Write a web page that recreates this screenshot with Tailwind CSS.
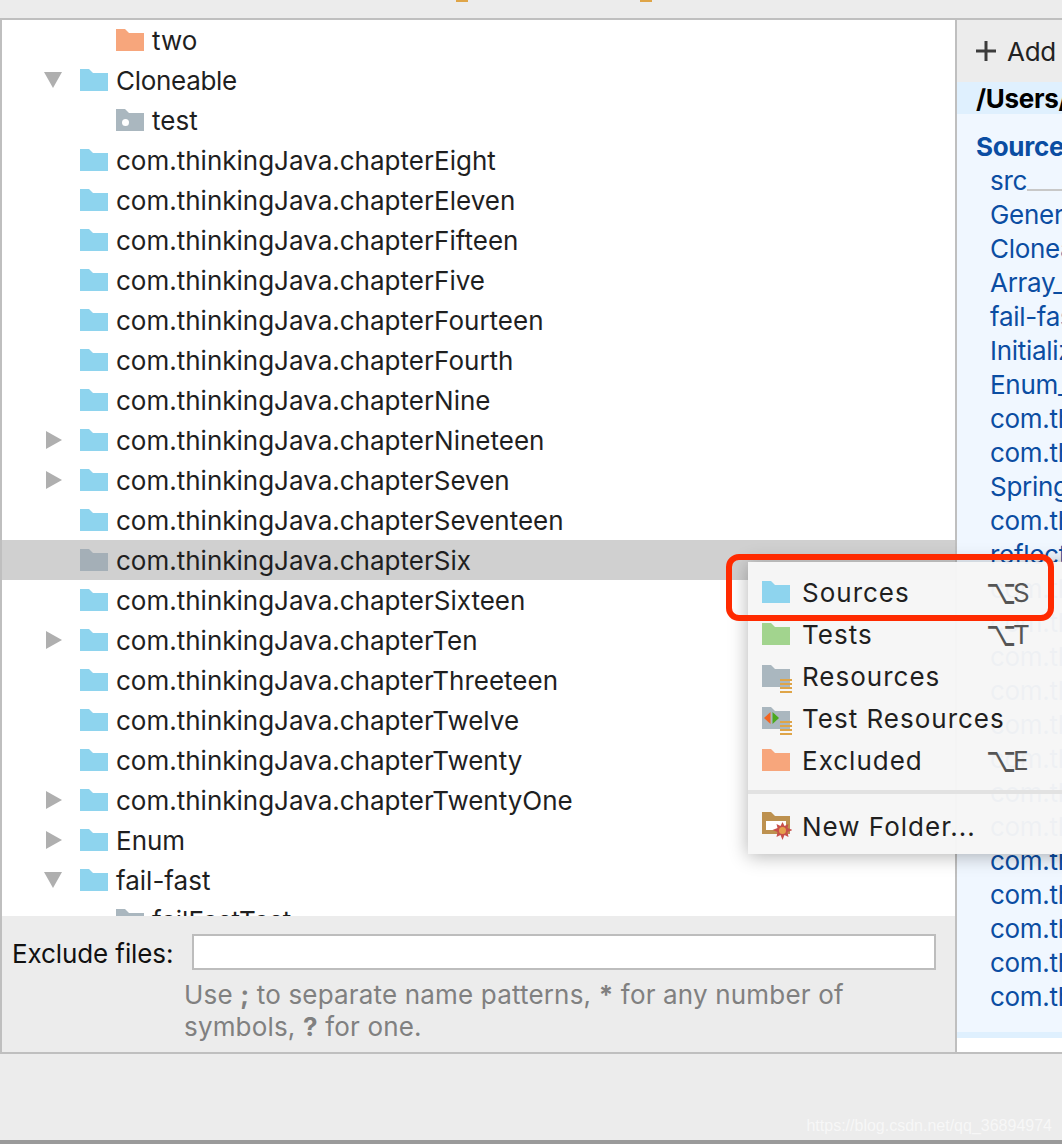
<!DOCTYPE html>
<html><head><meta charset="utf-8"><script src="https://cdn.jsdelivr.net/npm/@tailwindcss/browser@4"></script></head>
<body class="m-0">
<svg class="hidden" width="0" height="0">
<symbol id="folder" viewBox="0 0 28 22"><path fill="currentColor" d="M0 0H9L13 4H28V22H0Z"/></symbol>
<symbol id="right" viewBox="0 0 16 18"><path fill="#afafaf" d="M0 0L16 9L0 18Z"/></symbol>
<symbol id="down" viewBox="0 0 18 16"><path fill="#afafaf" d="M0 0H18L9 16Z"/></symbol>
<symbol id="lines" viewBox="0 0 12 14"><path fill="#dfa548" d="M0 0H12V2H0ZM0 4H12V6H0ZM0 8H12V10H0ZM0 12H12V14H0Z"/></symbol>
</svg>
<div class="relative flex h-[1144px] w-[1062px] flex-col overflow-hidden bg-[#ececec] font-['Inter',sans-serif] text-[26px] text-[#1f1f1f]">
  <div class="relative h-5 shrink-0 border-b-2 border-[#bfbfbf]">
    <div class="absolute left-[456px] top-0 h-0.5 w-3 bg-[#dfa548]"></div>
    <div class="absolute left-[640px] top-0 h-0.5 w-3 bg-[#dfa548]"></div>
  </div>
  <div class="flex h-[1034px] shrink-0 border-b-2 border-[#bfbfbf]">
    <div class="flex w-[955px] shrink-0 flex-col border-l-2 border-[#bfbfbf]">
      <div class="h-[896px] shrink-0 overflow-hidden bg-white">
        <div class="flex h-10 items-center pl-[114px]"><svg class="h-[22px] w-7 text-[#f7a67c]"><use href="#folder"/></svg><span class="ml-2">two</span></div>
        <div class="flex h-10 items-center pl-[42px]"><svg class="mr-[18px] h-4 w-[18px]"><use href="#down"/></svg><svg class="h-[22px] w-7 text-[#8ed4ee]"><use href="#folder"/></svg><span class="ml-2 tracking-[-0.3px]">Cloneable</span></div>
        <div class="flex h-10 items-center pl-[114px]"><span class="relative h-[22px] w-7"><svg class="h-[22px] w-7 text-[#aab7bf]"><use href="#folder"/></svg><span class="absolute left-[6px] top-[10px] size-[7px] rounded-full bg-white"></span></span><span class="ml-2">test</span></div>
        <div class="flex h-10 items-center pl-[78px]"><svg class="h-[22px] w-7 text-[#8ed4ee]"><use href="#folder"/></svg><span class="ml-2">com.thinkingJava.chapterEight</span></div>
        <div class="flex h-10 items-center pl-[78px]"><svg class="h-[22px] w-7 text-[#8ed4ee]"><use href="#folder"/></svg><span class="ml-2">com.thinkingJava.chapterEleven</span></div>
        <div class="flex h-10 items-center pl-[78px]"><svg class="h-[22px] w-7 text-[#8ed4ee]"><use href="#folder"/></svg><span class="ml-2">com.thinkingJava.chapterFifteen</span></div>
        <div class="flex h-10 items-center pl-[78px]"><svg class="h-[22px] w-7 text-[#8ed4ee]"><use href="#folder"/></svg><span class="ml-2">com.thinkingJava.chapterFive</span></div>
        <div class="flex h-10 items-center pl-[78px]"><svg class="h-[22px] w-7 text-[#8ed4ee]"><use href="#folder"/></svg><span class="ml-2">com.thinkingJava.chapterFourteen</span></div>
        <div class="flex h-10 items-center pl-[78px]"><svg class="h-[22px] w-7 text-[#8ed4ee]"><use href="#folder"/></svg><span class="ml-2">com.thinkingJava.chapterFourth</span></div>
        <div class="flex h-10 items-center pl-[78px]"><svg class="h-[22px] w-7 text-[#8ed4ee]"><use href="#folder"/></svg><span class="ml-2">com.thinkingJava.chapterNine</span></div>
        <div class="flex h-10 items-center pl-[44px]"><svg class="mr-[18px] h-[18px] w-4"><use href="#right"/></svg><svg class="h-[22px] w-7 text-[#8ed4ee]"><use href="#folder"/></svg><span class="ml-2">com.thinkingJava.chapterNineteen</span></div>
        <div class="flex h-10 items-center pl-[44px]"><svg class="mr-[18px] h-[18px] w-4"><use href="#right"/></svg><svg class="h-[22px] w-7 text-[#8ed4ee]"><use href="#folder"/></svg><span class="ml-2">com.thinkingJava.chapterSeven</span></div>
        <div class="flex h-10 items-center pl-[78px]"><svg class="h-[22px] w-7 text-[#8ed4ee]"><use href="#folder"/></svg><span class="ml-2">com.thinkingJava.chapterSeventeen</span></div>
        <div class="flex h-10 items-center bg-[#d0d0d0] pl-[78px]"><svg class="h-[22px] w-7 text-[#a4afb7]"><use href="#folder"/></svg><span class="ml-2">com.thinkingJava.chapterSix</span></div>
        <div class="flex h-10 items-center pl-[78px]"><svg class="h-[22px] w-7 text-[#8ed4ee]"><use href="#folder"/></svg><span class="ml-2">com.thinkingJava.chapterSixteen</span></div>
        <div class="flex h-10 items-center pl-[44px]"><svg class="mr-[18px] h-[18px] w-4"><use href="#right"/></svg><svg class="h-[22px] w-7 text-[#8ed4ee]"><use href="#folder"/></svg><span class="ml-2">com.thinkingJava.chapterTen</span></div>
        <div class="flex h-10 items-center pl-[78px]"><svg class="h-[22px] w-7 text-[#8ed4ee]"><use href="#folder"/></svg><span class="ml-2">com.thinkingJava.chapterThreeteen</span></div>
        <div class="flex h-10 items-center pl-[78px]"><svg class="h-[22px] w-7 text-[#8ed4ee]"><use href="#folder"/></svg><span class="ml-2">com.thinkingJava.chapterTwelve</span></div>
        <div class="flex h-10 items-center pl-[78px]"><svg class="h-[22px] w-7 text-[#8ed4ee]"><use href="#folder"/></svg><span class="ml-2">com.thinkingJava.chapterTwenty</span></div>
        <div class="flex h-10 items-center pl-[44px]"><svg class="mr-[18px] h-[18px] w-4"><use href="#right"/></svg><svg class="h-[22px] w-7 text-[#8ed4ee]"><use href="#folder"/></svg><span class="ml-2">com.thinkingJava.chapterTwentyOne</span></div>
        <div class="flex h-10 items-center pl-[44px]"><svg class="mr-[18px] h-[18px] w-4"><use href="#right"/></svg><svg class="h-[22px] w-7 text-[#8ed4ee]"><use href="#folder"/></svg><span class="ml-2">Enum</span></div>
        <div class="flex h-10 items-center pl-[42px]"><svg class="mr-[18px] h-4 w-[18px]"><use href="#down"/></svg><svg class="h-[22px] w-7 text-[#8ed4ee]"><use href="#folder"/></svg><span class="ml-2">fail-fast</span></div>
        <div class="flex h-10 items-center pl-[114px]"><svg class="h-[22px] w-7 text-[#aab7bf]"><use href="#folder"/></svg><span class="ml-2">failFastTest</span></div>
      </div>
      <div class="flex-1 pl-[10px] pt-[18px]">
        <div class="flex h-9 items-center">
          <span class="w-[180px] pt-0.5 tracking-[-0.1px] text-[#111]">Exclude files:</span>
          <div class="h-9 w-[744px] border-2 border-[#bdbdbd] bg-white"></div>
        </div>
        <p class="ml-[172px] mt-[9px] w-[740px] leading-8 tracking-[0.17px] text-[#808080]">Use <b>;</b> to separate name patterns, <b>*</b> for any number of symbols, <b>?</b> for one.</p>
      </div>
    </div>
    <div class="flex min-w-0 flex-1 flex-col border-l-2 border-[#bfbfbf] bg-white tracking-[-0.3px]">
      <div class="flex h-[62px] shrink-0 items-center bg-[#ececec] pl-[19px]"><svg class="shrink-0" width="20" height="20" viewBox="0 0 20 20"><path fill="#3c3c3c" d="M8.500 0H11.500V8.500H20V11.500H11.500V20H8.500V11.500H0V8.500H8.500Z"/></svg><span class="ml-[11px] whitespace-nowrap text-[#222]">Add Content Root</span></div>
      <div class="h-8 shrink-0 overflow-hidden whitespace-nowrap bg-[#dff0fe] pl-[19px] pt-px font-bold leading-8 text-black">/Users/mac/java</div>
      <div class="h-[918px] shrink-0 overflow-hidden whitespace-nowrap bg-[#f0f7ff] pl-[19px] pt-4 leading-[34px] text-[#0b4da2]">
        <div class="font-bold">Source Folders</div>
        <div class="flex items-end pl-[14px]"><span>src</span><span class="mb-[7px] h-0.5 w-12 bg-[#c8c8c8]"></span></div>
        <div class="pl-[14px]">Generics</div>
        <div class="pl-[14px]">Cloneable</div>
        <div class="pl-[14px]">Array_</div>
        <div class="pl-[14px]">fail-fast</div>
        <div class="pl-[14px]">Initialization</div>
        <div class="pl-[14px]">Enum_</div>
        <div class="pl-[14px]">com.thinking</div>
        <div class="pl-[14px]">com.thinking</div>
        <div class="pl-[14px]">Spring_</div>
        <div class="pl-[14px]">com.thinking</div>
        <div class="pl-[14px]">reflect</div>
        <div class="pl-[14px]">com.thinking</div>
        <div class="pl-[14px]">com.thinking</div>
        <div class="pl-[14px]">com.thinking</div>
        <div class="pl-[14px]">com.thinking</div>
        <div class="pl-[14px]">com.thinking</div>
        <div class="pl-[14px]">com.thinking</div>
        <div class="pl-[14px]">com.thinking</div>
        <div class="pl-[14px]">com.thinking</div>
        <div class="pl-[14px]">com.thinking</div>
        <div class="pl-[14px]">com.thinking</div>
        <div class="pl-[14px]">com.thinking</div>
        <div class="pl-[14px]">com.thinking</div>
        <div class="pl-[14px]">com.thinking</div>
      </div>
      <div class="h-1.5 shrink-0 bg-[#dff0fe]"></div>
    </div>
  </div>
  <div class="relative flex-1 bg-[#ececec]">
    <span class="absolute right-[10px] top-[60px] whitespace-nowrap font-['Liberation_Sans',sans-serif] text-[16px] text-white/60">https://blog.csdn.net/qq_36894974</span>
  </div>
  <div class="h-1 shrink-0 bg-[#9a9a9a]"></div>

  <div class="absolute left-[748px] top-[562px] h-[292px] w-[340px] bg-[#f6f6f6]/[0.97] py-[9px] tracking-[1px] shadow-[0_2px_18px_rgba(0,0,0,0.3)]">
    <div class="flex h-[42px] items-center pl-[14px]"><svg class="h-[22px] w-7 text-[#8ed4ee]"><use href="#folder"/></svg><span class="ml-3 w-[184px]">Sources</span><span class="mr-[-3px] inline-block scale-y-[1.35] font-['DejaVu_Sans',sans-serif] tracking-normal text-[#555]">⌥</span><span class="text-[#555] tracking-normal">S</span></div>
    <div class="flex h-[42px] items-center pl-[14px]"><svg class="h-[22px] w-7 text-[#a2d48e]"><use href="#folder"/></svg><span class="ml-3 w-[184px]">Tests</span><span class="mr-[-3px] inline-block scale-y-[1.35] font-['DejaVu_Sans',sans-serif] tracking-normal text-[#555]">⌥</span><span class="text-[#555] tracking-normal">T</span></div>
    <div class="flex h-[42px] items-center pl-[14px]"><span class="relative h-[22px] w-7"><svg class="absolute h-[22px] w-7 text-[#aab7bf]"><use href="#folder"/></svg><svg class="absolute left-[18px] top-[14px] h-3.5 w-3"><use href="#lines"/></svg></span><span class="ml-3">Resources</span></div>
    <div class="flex h-[42px] items-center pl-[14px]"><span class="relative h-[22px] w-7"><svg class="absolute h-[22px] w-7 text-[#aab7bf]"><use href="#folder"/></svg><svg class="absolute left-[18px] top-[14px] h-3.5 w-3"><use href="#lines"/></svg><svg class="absolute left-0.5 top-[5px]" width="15" height="12" viewBox="0 0 15 12"><path fill="#f26522" d="M6.500 0V12L0 6Z"/><path fill="#4aa81e" d="M8.500 0L15 6L8.500 12Z"/></svg></span><span class="ml-3 whitespace-nowrap">Test Resources</span></div>
    <div class="flex h-[42px] items-center pl-[14px]"><svg class="h-[22px] w-7 text-[#f7a67c]"><use href="#folder"/></svg><span class="ml-3 w-[184px]">Excluded</span><span class="mr-[-3px] inline-block scale-y-[1.35] font-['DejaVu_Sans',sans-serif] tracking-normal text-[#555]">⌥</span><span class="text-[#555] tracking-normal">E</span></div>
    <div class="mt-[9px] h-1 bg-[#e2e2e2]"></div>
    <div class="mt-[11px] flex h-[42px] items-center pl-[14px]"><svg class="shrink-0" width="30" height="28" viewBox="0 0 30 28"><path fill="#bd914f" d="M0 0H9L13 4H28V22H0Z"/><path fill="#fff" d="M4 9H24V18H4Z"/><g transform="translate(0.5 2)"><path fill="#c8504a" d="M20 8L22 12L26 10L25 14L30 16L25 18L26 23L22 21L20 26L18 21L14 23L15 18L10 16L15 14L14 10L18 12Z"/><circle cx="20" cy="16.500" r="3.500" fill="#e5a04b"/></g></svg><span class="ml-2.5 whitespace-nowrap">New Folder...</span></div>
  </div>
  <div class="absolute left-[726px] top-[554px] h-[67px] w-[328px] rounded-[13px] border-[6px] border-[#ff2a00]"></div>
</div>
</body></html>
